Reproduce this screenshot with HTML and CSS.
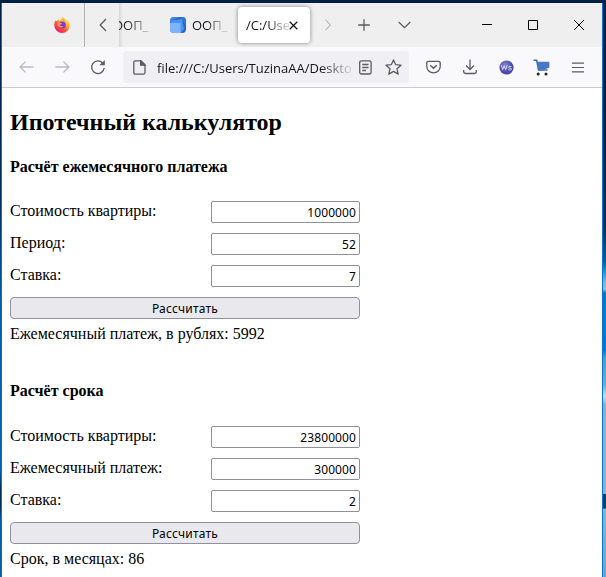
FILE: index.html
```html
<!DOCTYPE html>
<html lang="ru">
<head>
<meta charset="utf-8">
<title>Ипотечный калькулятор</title>
<link rel="stylesheet" href="styles.css">
</head>
<body>
<div class="window">
  <div class="tabs">
    <div class="pinned">
      <svg width="16" height="16" viewBox="0 0 16 16">
        <defs>
          <linearGradient id="fx" x1=".85" y1=".1" x2=".2" y2=".95"><stop offset="0" stop-color="#fff04f"/><stop offset=".35" stop-color="#ffa62e"/><stop offset=".65" stop-color="#ff4a3e"/><stop offset="1" stop-color="#e51a78"/></linearGradient>
          <linearGradient id="fx2" x1="1" y1="0" x2="0" y2="1"><stop offset="0" stop-color="#ffe14a"/><stop offset="1" stop-color="#ff8a2c"/></linearGradient>
        </defs>
        <path fill="url(#fx)" d="M1.7 3.2C1.9 4 2.3 4.2 2.8 4.1 3.4 3.2 4.2 2.6 5 2.3c-.3.8-.2 1.3.1 1.9C7 3 8 2.5 8.300 0.200 10.500 1.300 11 2.700 12.200 3.800 13 3.500 12.900 3 12.900 2.600c1.900 1.600 2.900 3.600 2.900 5.800A7.700 7.500 0 0 1 .3 8.500C.2 6.500.7 4.700 1.700 3.200z"/>
        <path fill="url(#fx2)" d="M8.300.2c2.200 1.100 2.700 2.500 3.900 3.600 1.500 1.700 1.700 4.200.6 5.900C12.500 7 11 5 8 4.500 7 3.500 7.300 1.700 8.300.2z"/>
        <circle cx="8.300" cy="8" r="3.500" fill="#8338d8"/>
        <path fill="#ff9a35" d="M3.500 6.200c1.500-1.200 3.200-.7 4.500.2-.1.900-2.200.9-2.400 2 .8 1 2.600.8 3.800.3-.8 1.900-3.500 2.600-5 .8-.8-1-1.100-2.200-.9-3.300z"/>
      </svg>
    </div>
    <div class="scroll-left">
      <svg width="8" height="14" viewBox="0 0 8 14" class="line"><path d="M7 1 1.200 7 7 13"/></svg>
    </div>
    <div class="tab tab-cut"><span>ООП_</span></div>
    <div class="tab tab-icon">
      <svg width="16" height="16" viewBox="0 0 16 16">
        <path fill="#2166c9" d="M4 0h8q4 0 4 4v8q0 4-4 4H4q-4 0-4-4V4q0-4 4-4z"/>
        <path fill="#3f8bea" d="M4 0h6L0 3.500Q.5 0 4 0z"/>
        <path fill="#4b93ed" d="M0 3.500 12 2l2 10-3 4H4z"/>
        <path fill="#2f79dc" d="M10.500 0H12q4 0 4 4v5l-4-7z"/>
        <path fill="#80b3ff" d="M0 6h10.500v10H4q-4 0-4-4z"/>
      </svg>
      <span>ООП_</span>
    </div>
    <div class="tab tab-active"><span>/C:/Use</span>
      <svg width="9" height="9" viewBox="0 0 9 9"><path d="m.7.7 7.600 7.600M8.300.7.7 8.300" stroke="#15141a" stroke-width="1.250"/></svg>
    </div>
    <div class="slot scroll-right"><svg width="8" height="12" viewBox="0 0 8 12" class="line"><path d="m1.500.7 5 5.300-5 5.300"/></svg></div>
    <div class="slot new-tab"><svg width="12" height="12" viewBox="0 0 12 12" class="line"><path d="M6 .2v11.600M.2 6h11.600"/></svg></div>
    <div class="slot all-tabs"><svg width="13" height="8" viewBox="0 0 13 8" class="line"><path d="m.7 1 5.800 5.600L12.300 1"/></svg></div>
    <div class="slot win win-min"><svg width="10" height="10" viewBox="0 0 10 10"><path d="M0 4.500h10" stroke="#000"/></svg></div>
    <div class="slot win"><svg width="10" height="10" viewBox="0 0 10 10"><path d="M.5.5h9v9h-9z" fill="none" stroke="#000"/></svg></div>
    <div class="slot win"><svg width="10" height="10" viewBox="0 0 10 10"><path d="m0 0 10 10M10 0 0 10" stroke="#000"/></svg></div>
  </div>

  <div class="toolbar">
    <div class="slot nav disabled"><svg width="15" height="12" viewBox="0 0 15 12" class="line"><path d="M6.500.6 1.100 6l5.400 5.400M1.200 6H14.500"/></svg></div>
    <div class="slot nav disabled"><svg width="15" height="12" viewBox="0 0 15 12" class="line"><path d="M8.500.6 13.900 6l-5.400 5.400M13.800 6H.5"/></svg></div>
    <div class="slot nav"><svg width="16" height="16" viewBox="0 0 16 16" class="line reload"><path d="M12.600 4A6.300 6.300 0 1 0 14.200 9"/><path d="M14.800 1v5.200H9.300z" fill="#5b5b66" stroke="none"/></svg></div>
    <div class="urlbar">
      <svg width="13" height="15" viewBox="0 0 13 15" class="line doc"><path d="M2.300.8H8l4 4v7.700q0 1.700-1.700 1.700h-8Q.8 14.200.8 12.500V2.300Q.8.8 2.300.8z"/><path d="M7.600.8v4.400H12z" fill="#5b5b66"/></svg>
      <span class="url">file:///C:/Users/TuzinaAA/Deskto</span>
      <svg width="13" height="15" viewBox="0 0 13 15" class="line reader"><rect x=".7" y=".8" width="11.400" height="13.200" rx="1.700"/><path d="M3.300 4.500h6.200M3.300 7.500h6.200M3.300 10.500h3.700"/></svg>
      <svg width="17" height="16" viewBox="0 0 17 16" class="line"><path stroke-linejoin="round" d="m8.500.9 2.100 4.700 5.400.6-4 3.600 1.200 5.300-4.700-2.700-4.700 2.700L5 9.800 1 6.200l5.400-.6z"/></svg>
    </div>
    <div class="slot tool pocket"><svg width="15" height="14" viewBox="0 0 15 14" class="line"><path d="M2.300 1.300h10.400q1.500 0 1.500 1.500V6.500a6.700 6.400 0 0 1-13.400 0V2.800q0-1.500 1.500-1.500z"/><path d="M4.200 5.300 7.500 8.300l3.300-3" stroke-width="1.500"/></svg></div>
    <div class="slot tool"><svg width="14" height="16" viewBox="0 0 14 16" class="line"><path d="M7 .5v9.800M3 6.500l4 4 4-4M.7 11v1.700q0 1.800 1.800 1.800h9q1.800 0 1.800-1.800V11"/></svg></div>
    <div class="slot tool"><svg width="15" height="15" viewBox="0 0 15 15">
      <defs><radialGradient id="ball" cx=".4" cy=".35"><stop offset="0" stop-color="#8787d6"/><stop offset="1" stop-color="#4848aa"/></radialGradient></defs>
      <circle cx="7.500" cy="7.500" r="7.100" fill="url(#ball)"/><path d="m2.300 5.200 1.400 4.500 1.500-4 1.500 4 1.400-4.500M12.500 6.500q-3-.7-3 .8c0 1.300 3 .3 3 1.700 0 1.200-1.800 1.200-3.200.6" fill="none" stroke="#d3d3f6" stroke-width="1"/></svg></div>
    <div class="slot tool cart"><svg width="17" height="17" viewBox="0 0 17 17"><path d="M.5 1.300h3.200l1.800 9.600h9" fill="none" stroke="#3b69b4" stroke-width="1.500"/><path d="M4 2.700h12.400v6L6 12z" fill="#4778c4"/><circle cx="5.200" cy="15" r="1.500" fill="#222"/><circle cx="13" cy="15" r="1.500" fill="#222"/></svg></div>
    <div class="slot tool"><svg width="12" height="11" viewBox="0 0 12 11"><path d="M0 1.200h12M0 5.500h12M0 9.800h12" stroke="#5b5b66" stroke-width="1.200"/></svg></div>
  </div>

  <main class="page">
    <h2>Ипотечный калькулятор</h2>
    <section class="calc">
      <h4>Расчёт ежемесячного платежа</h4>
      <div class="row"><label for="c1">Стоимость квартиры:</label><input id="c1" value="1000000"></div>
      <div class="row"><label for="p1">Период:</label><input id="p1" value="52"></div>
      <div class="row"><label for="r1">Ставка:</label><input id="r1" value="7"></div>
      <button>Рассчитать</button>
      <div class="result">Ежемесячный платеж, в рублях: 5992</div>
    </section>
    <section class="calc">
      <h4>Расчёт срока</h4>
      <div class="row"><label for="c2">Стоимость квартиры:</label><input id="c2" value="23800000"></div>
      <div class="row"><label for="p2">Ежемесячный платеж:</label><input id="p2" value="300000"></div>
      <div class="row"><label for="r2">Ставка:</label><input id="r2" value="2"></div>
      <button>Рассчитать</button>
      <div class="result">Срок, в месяцах: 86</div>
    </section>
  </main>
</div>
</body>
</html>
```
FILE: styles.css
```css
* { box-sizing: border-box; }

html { height: 100%; overflow: hidden; }

body {
  margin: 0;
  height: 577px;
  padding: 3px 3px 0 1px;
  overflow: hidden;
  background:
    linear-gradient(#001f42 0, #001f42 3px, transparent 3px),
    linear-gradient(#002448 0, #001b3e 100px, #003064 230px, #0060ab 262px, #1898dc 272px, #75b8df 282px, #8cbfde 289px, #0079d1 293px, #0079d1 350px, #3fa0d6 358px, #5eb0dc 385px, #c5dff0 396px, #80b3d6 405px, #80b3d6 494px, #003e77 494px, #003e77 508px, #80b5db 509px, #5fa8d6 577px) right / 3px 100% no-repeat,
    linear-gradient(#001f42 0, #002f62 200px, #005ba8 300px, #0062b5 470px, #002c58 490px, #002c58 506px, #005ba8 520px);
}

.window {
  display: flex;
  flex-direction: column;
  height: 574px;
  border: solid #0f74c8;
  border-width: 0 1px;
  background: #fff;
}

svg { display: block; flex: none; }
.line { fill: none; stroke: #5b5b66; stroke-width: 1.3; }
.slot { display: flex; flex: none; align-items: center; justify-content: center; }

/* Tab strip */
.tabs {
  display: flex;
  flex: none;
  height: 44px;
  background: #efefef;
  font: 13px "Open Sans", "Noto Sans", sans-serif;
  color: #15141a;
}
.pinned { display: flex; align-items: center; width: 83px; padding-left: 52px; border-right: 1px solid #b0b0b0; }
.scroll-left { display: flex; align-items: center; width: 34px; padding-left: 14px; }
.tab { display: flex; align-items: center; white-space: nowrap; }
.tab span { overflow: hidden; }
.tab-cut {
  width: 51px;
  overflow: hidden;
  background: linear-gradient(90deg, #d8d8d8, #efefef 4px);
}
.tab-cut span { text-indent: -6px; width: 32px; }
.tab-icon { gap: 6px; width: 68px; }
.tab-icon span { width: 36px; }
.tab-cut span {
  -webkit-mask-image: linear-gradient(90deg, #000 20%, rgba(0, 0, 0, .25) 90%);
  mask-image: linear-gradient(90deg, #000 20%, rgba(0, 0, 0, .25) 90%);
}
.tab-icon span {
  -webkit-mask-image: linear-gradient(90deg, #000 40%, rgba(0, 0, 0, .2) 85%);
  mask-image: linear-gradient(90deg, #000 40%, rgba(0, 0, 0, .2) 85%);
}
.tab-active {
  width: 72px;
  height: 36px;
  margin-top: 4px;
  padding-left: 8px;
  border-radius: 4px;
  background: #fff;
  box-shadow: 0 0 4px rgba(0, 0, 0, .45);
}
.tab-active span {
  width: 43px;
  -webkit-mask-image: linear-gradient(90deg, #000 50%, rgba(0, 0, 0, .15));
  mask-image: linear-gradient(90deg, #000 50%, rgba(0, 0, 0, .15));
}
.scroll-right { width: 36px; opacity: .3; }
.new-tab { width: 35px; }
.all-tabs { width: 46px; }
.win { width: 46px; }
.win-min { margin-left: 37px; }

/* Navigation toolbar */
.toolbar {
  display: flex;
  flex: none;
  height: 41px;
  padding-left: 6px;
  background: #f9f9fb;
  border-bottom: 1px solid #ccc;
}
.nav { width: 36px; }
.disabled { opacity: .4; }
.urlbar {
  display: flex;
  align-items: center;
  width: 286px;
  height: 32px;
  margin: 4px 0 0 7px;
  padding-left: 10px;
  border-radius: 4px;
  background: #f0f0f4;
}
.url {
  width: 194px;
  margin: 1px 8px 0 11px;
  overflow: hidden;
  white-space: nowrap;
  font: 13px "Open Sans", "Noto Sans", sans-serif;
  color: #15141a;
  -webkit-mask-image: linear-gradient(90deg, #000 84%, rgba(0, 0, 0, .15));
  mask-image: linear-gradient(90deg, #000 84%, rgba(0, 0, 0, .15));
}
.reader { margin-right: 13px; }
.tool { width: 36px; }
.pocket { margin: 0 1px 0 6px; }
.cart { padding-right: 2px; }

/* Page */
.page { padding: 19px 8px 0; font: 16px/20px "Liberation Serif", serif; color: #000; }
h2 { margin: 0 0 20px; font-size: 24px; line-height: 30px; }
.calc { width: 350px; height: 224px; }
.calc + .calc { height: auto; }
h4 { margin: 0 0 20px; font-size: 16px; line-height: 20px; }
.calc + .calc h4 { margin-bottom: 21px; }
.row { display: flex; height: 32px; }
.row label { width: 201px; padding-top: 4px; line-height: 20px; }
.row input {
  width: 149px;
  height: 22px;
  margin: 4px 0 0;
  padding: 1px 3px;
  border: 1px solid #8f8f9d;
  border-radius: 2px;
  text-align: right;
  letter-spacing: .1px;
  font: 12px "Noto Sans", sans-serif;
  color: #000;
}
button {
  display: block;
  width: 350px;
  height: 22px;
  margin: 4px 0 5px;
  padding: 1px 0 0;
  border: 1px solid #8f8f9d;
  border-radius: 4px;
  background: #e9e9ed;
  letter-spacing: .2px;
  font: 12px "Noto Sans", sans-serif;
  color: #000;
}
```
